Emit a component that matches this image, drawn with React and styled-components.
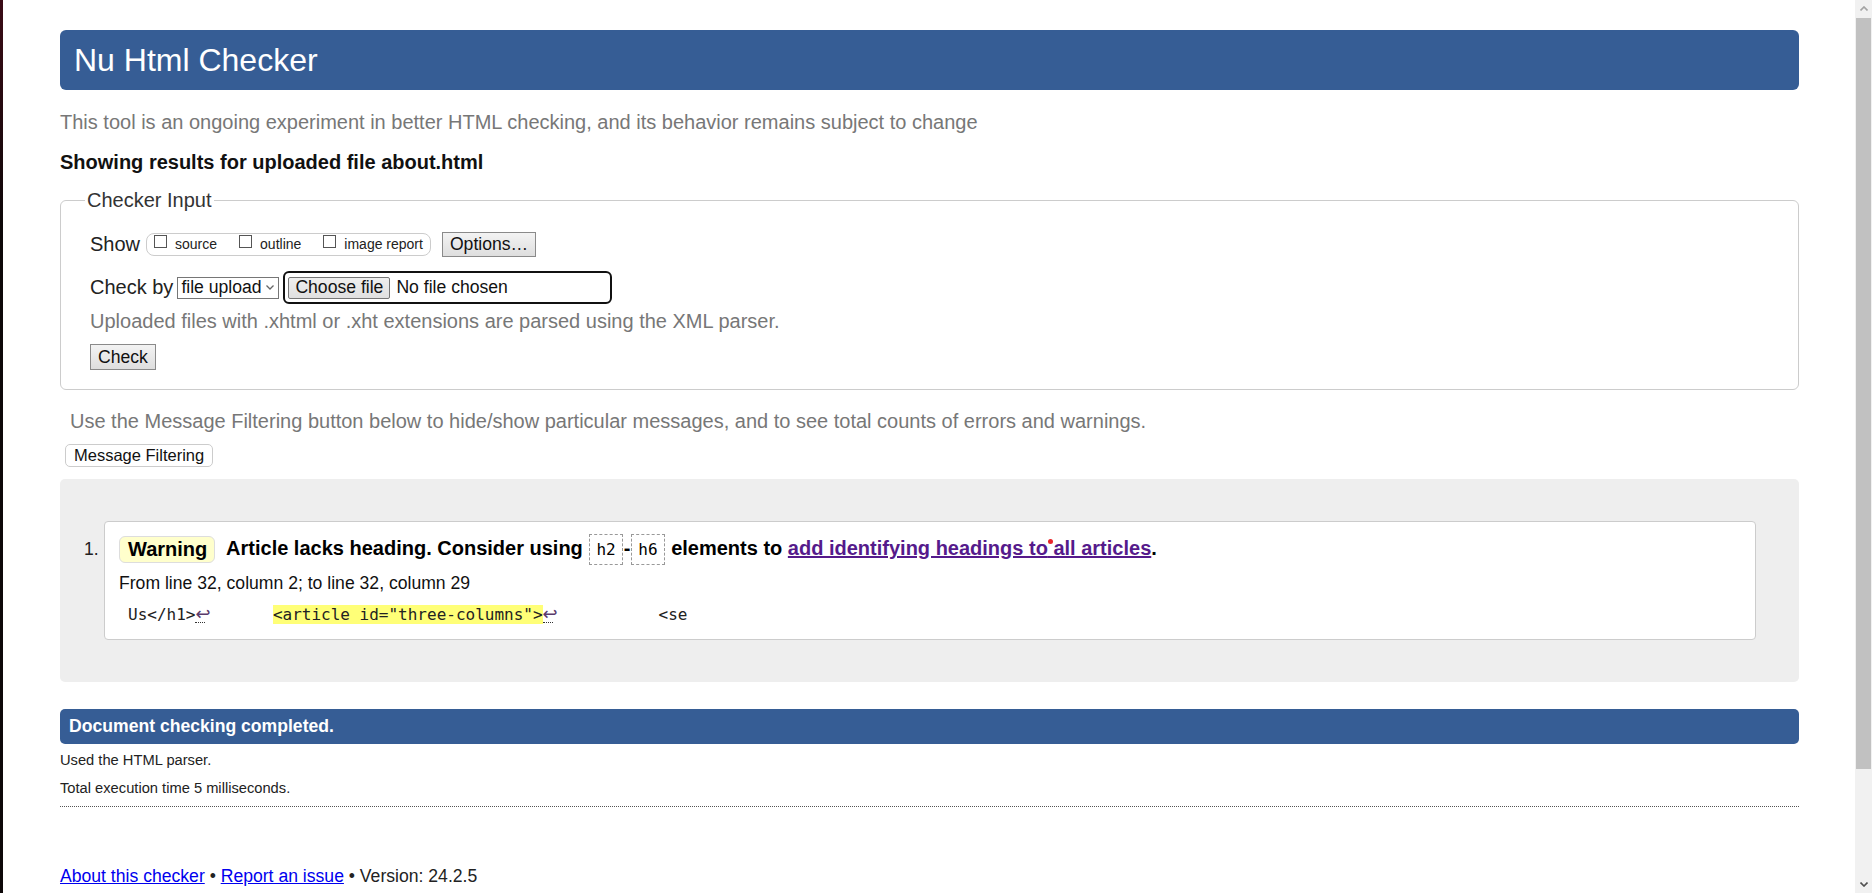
import React from 'react'
import styled, { createGlobalStyle } from 'styled-components'

const GlobalStyle = createGlobalStyle`
  html, body {
    margin: 0;
    padding: 0;
    height: 100%;
    overflow: hidden;
  }
  body {
    font-family: "Liberation Sans", Arial, sans-serif;
    color: #222;
    background: #fff;
  }
`

const Screen = styled.div`
  display: flex;
  height: 893px;
`

const EdgeStripe = styled.div`
  flex: none;
  width: 3px;
  background: linear-gradient(#3b0b16, #0d0708 25%, #0d0708);
`

const Page = styled.main`
  flex: 1;
  min-width: 0;
  padding: 30px 56px 0 57px;
  overflow: hidden;
`

const Scrollbar = styled.div`
  flex: none;
  width: 17px;
  background: #f1f1f1;
  display: flex;
  flex-direction: column;
`

const ScrollArrow = styled.div`
  flex: none;
  height: 17px;
  display: flex;
  align-items: center;
  justify-content: center;
  svg {
    width: 8px;
    height: 5px;
  }
  path {
    fill: none;
    stroke: ${(p) => (p.$dim ? '#a3a3a3' : '#505050')};
    stroke-width: 1.6px;
  }
`

const ScrollThumb = styled.div`
  flex: none;
  height: 751px;
  margin: 1px 1px 0;
  background: #c1c1c1;
`

const ScrollTrack = styled.div`
  flex: 1;
`

const Title = styled.h1`
  margin: 0;
  height: 60px;
  padding: 0 14px;
  background: #365d95;
  color: #fff;
  border-radius: 6px;
  font-size: 32px;
  font-weight: normal;
  line-height: 60px;
`

const Note = styled.p`
  margin: ${(p) => p.$m || '0'};
  padding-left: ${(p) => p.$indent || 0}px;
  font-size: 20px;
  line-height: 24px;
  color: #777;
`

const ResultsFor = styled.p`
  margin: 16px 0 0;
  font-size: 20px;
  line-height: 24px;
  font-weight: bold;
  color: #111;
`

const InputSet = styled.fieldset`
  margin: 14px 0 0;
  padding: 19px 29px 19px;
  border: 1px solid #ccc;
  border-radius: 6px;
  min-width: 0;
`

const Legend = styled.legend`
  margin-left: -5px;
  padding: 0 2px;
  font-size: 20px;
  line-height: 24px;
  color: #333;
`

const Row = styled.div`
  display: flex;
  align-items: center;
  height: ${(p) => p.$h}px;
  margin-top: ${(p) => p.$mt || 0}px;
  font-size: 20px;
  color: #222;
`

const ShowGroup = styled.div`
  display: flex;
  align-items: center;
  height: 23px;
  box-sizing: border-box;
  margin-left: 6px;
  padding: 0 7px;
  border: 1px solid #ccc;
  border-radius: 8px;
`

const CheckItem = styled.label`
  display: flex;
  align-items: center;
  height: 100%;
  font-size: 14px;
  line-height: 16px;
  color: #222;
  & + & {
    margin-left: 22px;
  }
`

const Box = styled.input`
  appearance: none;
  align-self: flex-start;
  width: 13px;
  height: 13px;
  margin: 1px 8px 0 0;
  border: 1px solid #555;
  background: #fff;
  box-sizing: border-box;
`

const Button = styled.button`
  height: ${(p) => p.$h || 25}px;
  margin-left: ${(p) => p.$ml || 0}px;
  padding: 0 7px;
  font-family: inherit;
  font-size: 17.6px;
  color: #111;
  border: 1px solid #8a8a8a;
  border-radius: 0;
  background: linear-gradient(#f3f3f3, #dedede);
`

const Select = styled.div`
  display: flex;
  align-items: center;
  justify-content: space-between;
  width: 102px;
  height: 22px;
  box-sizing: border-box;
  margin-left: 4px;
  padding: 0 4px 0 3px;
  border: 1px solid #767676;
  font-size: 17.6px;
  color: #111;
  svg {
    width: 8px;
    height: 5px;
  }
  path {
    fill: none;
    stroke: #666;
    stroke-width: 1.3px;
  }
`

const FileRing = styled.div`
  display: flex;
  align-items: center;
  width: 329px;
  height: 33px;
  box-sizing: border-box;
  margin-left: 4px;
  padding: 0 3px;
  border: 2px solid #111;
  border-radius: 6px;
  font-size: 17.6px;
  color: #111;
`

const ChooseButton = styled.span`
  display: flex;
  align-items: center;
  height: 22px;
  box-sizing: border-box;
  padding: 0 6px;
  margin-right: 6px;
  border: 1px solid #767676;
  border-radius: 2px;
  background: linear-gradient(#efefef, #e0e0e0);
`

const FilterButton = styled.button`
  display: block;
  height: 23px;
  margin: 11px 0 0 5px;
  padding: 0 8px;
  font-family: inherit;
  font-size: 16.5px;
  color: #111;
  background: #fff;
  border: 1px solid #ccc;
  border-radius: 5px;
`

const Results = styled.div`
  margin-top: 12px;
  padding: 42px 43px 42px 24px;
  background: #eee;
  border-radius: 5px;
`

const ResultItem = styled.div`
  display: flex;
`

const ItemNumber = styled.span`
  flex: none;
  width: 20px;
  padding-top: 18px;
  font-size: 17.6px;
  line-height: 21px;
  color: #222;
`

const Message = styled.div`
  flex: 1;
  padding: 11px 14px 15px;
  background: #fff;
  border: 1px solid #ccc;
  border-radius: 4px;
`

const MessageText = styled.p`
  margin: 0;
  font-size: 20px;
  font-weight: bold;
  line-height: 31px;
  color: #000;
`

const Badge = styled.strong`
  display: inline-block;
  margin-right: 6px;
  padding: 0 7px 0 8px;
  line-height: 25px;
  background: #ffffcc;
  border: 1px solid #ddd;
  border-radius: 6px;
  vertical-align: middle;
`

const Code = styled.code`
  display: inline-block;
  margin: 0 1px;
  padding: 0 6px;
  font-family: "DejaVu Sans Mono", "Liberation Mono", monospace;
  font-size: 16px;
  font-weight: normal;
  line-height: 29px;
  border: 1px dashed #999;
  vertical-align: middle;
`

const DocLink = styled.a`
  color: #551a8b;
  text-decoration: underline;
`

const Speck = styled.span`
  display: inline-block;
  width: 5px;
  height: 5px;
  margin: 0 -5px 0 0;
  border-radius: 50%;
  background: #e8262a;
  vertical-align: 11px;
`

const Location = styled.p`
  margin: 7px 0 0;
  font-size: 17.6px;
  line-height: 22px;
  color: #111;
`

const Extract = styled.pre`
  margin: 12px 0 0;
  padding-left: 9px;
  font-family: "DejaVu Sans Mono", "Liberation Mono", monospace;
  font-size: 16px;
  line-height: 18px;
  color: #222;
`

const Mark = styled.b`
  font-weight: normal;
  background: #ffff77;
`

const LineBreak = styled.span`
  display: inline-block;
  width: 10px;
  font-family: "DejaVu Sans", sans-serif;
  font-size: 18px;
  line-height: 16px;
  color: #5a3b6b;
  border-bottom: 1px dotted #333;
`

const DoneBar = styled.h2`
  margin: 27px 0 0;
  height: 35px;
  padding: 0 9px;
  background: #365d95;
  border-radius: 5px;
  color: #fff;
  font-size: 17.6px;
  line-height: 35px;
`

const Detail = styled.p`
  margin: ${(p) => p.$mt}px 0 0;
  font-size: 14.7px;
  line-height: 18px;
  color: #222;
`

const Rule = styled.hr`
  margin: 9px 0 0;
  border: none;
  border-top: 1px dotted #555;
`

const Footer = styled.p`
  margin: 58px 0 0;
  font-size: 17.6px;
  line-height: 22px;
  color: #222;
  a {
    color: #0000ee;
  }
`

const Chevron = ({ up }) => (
  <svg viewBox='0 0 8 5'>
    <path d={up ? 'M0.5 4.5 L4 1 L7.5 4.5' : 'M0.5 0.5 L4 4 L7.5 0.5'} />
  </svg>
)

export default function App() {
  return (
    <Screen>
      <GlobalStyle />
      <EdgeStripe />
      <Page>
        <Title>Nu Html Checker</Title>
        <Note $m='20px 0 0'>
          This tool is an ongoing experiment in better HTML checking, and its behavior remains subject to change
        </Note>
        <ResultsFor>Showing results for uploaded file about.html</ResultsFor>

        <InputSet>
          <Legend>Checker Input</Legend>
          <Row $h={26}>
            Show
            <ShowGroup>
              <CheckItem><Box type='checkbox' />source</CheckItem>
              <CheckItem><Box type='checkbox' />outline</CheckItem>
              <CheckItem><Box type='checkbox' />image report</CheckItem>
            </ShowGroup>
            <Button $ml={11}>Options…</Button>
          </Row>
          <Row $h={33} $mt={14}>
            Check by
            <Select>
              file upload
              <Chevron />
            </Select>
            <FileRing>
              <ChooseButton>Choose file</ChooseButton>
              No file chosen
            </FileRing>
          </Row>
          <Note $m='5px 0 0'>Uploaded files with .xhtml or .xht extensions are parsed using the XML parser.</Note>
          <Row $h={26} $mt={11}>
            <Button $h={26}>Check</Button>
          </Row>
        </InputSet>

        <Note $m='19px 0 0' $indent={10}>
          Use the Message Filtering button below to hide/show particular messages, and to see total counts of errors and warnings.
        </Note>
        <FilterButton>Message Filtering</FilterButton>

        <Results>
          <ResultItem>
            <ItemNumber>1.</ItemNumber>
            <Message>
              <MessageText>
                <Badge>Warning</Badge> Article lacks heading. Consider using <Code>h2</Code>-<Code>h6</Code> elements to{' '}
                <DocLink href='#'>add identifying headings to<Speck /> all articles</DocLink>.
              </MessageText>
              <Location>From line 32, column 2; to line 32, column 29</Location>
              <Extract>
                Us&lt;/h1&gt;<LineBreak>↩</LineBreak>{'       '}
                <Mark>&lt;article id="three-columns"&gt;</Mark>
                <LineBreak>↩</LineBreak>{'           '}&lt;se
              </Extract>
            </Message>
          </ResultItem>
        </Results>

        <DoneBar>Document checking completed.</DoneBar>
        <Detail $mt={7}>Used the HTML parser.</Detail>
        <Detail $mt={10}>Total execution time 5 milliseconds.</Detail>
        <Rule />
        <Footer>
          <a href='#'>About this checker</a> • <a href='#'>Report an issue</a> • Version: 24.2.5
        </Footer>
      </Page>
      <Scrollbar>
        <ScrollArrow $dim><Chevron up /></ScrollArrow>
        <ScrollThumb />
        <ScrollTrack />
        <ScrollArrow><Chevron /></ScrollArrow>
      </Scrollbar>
    </Screen>
  )
}
